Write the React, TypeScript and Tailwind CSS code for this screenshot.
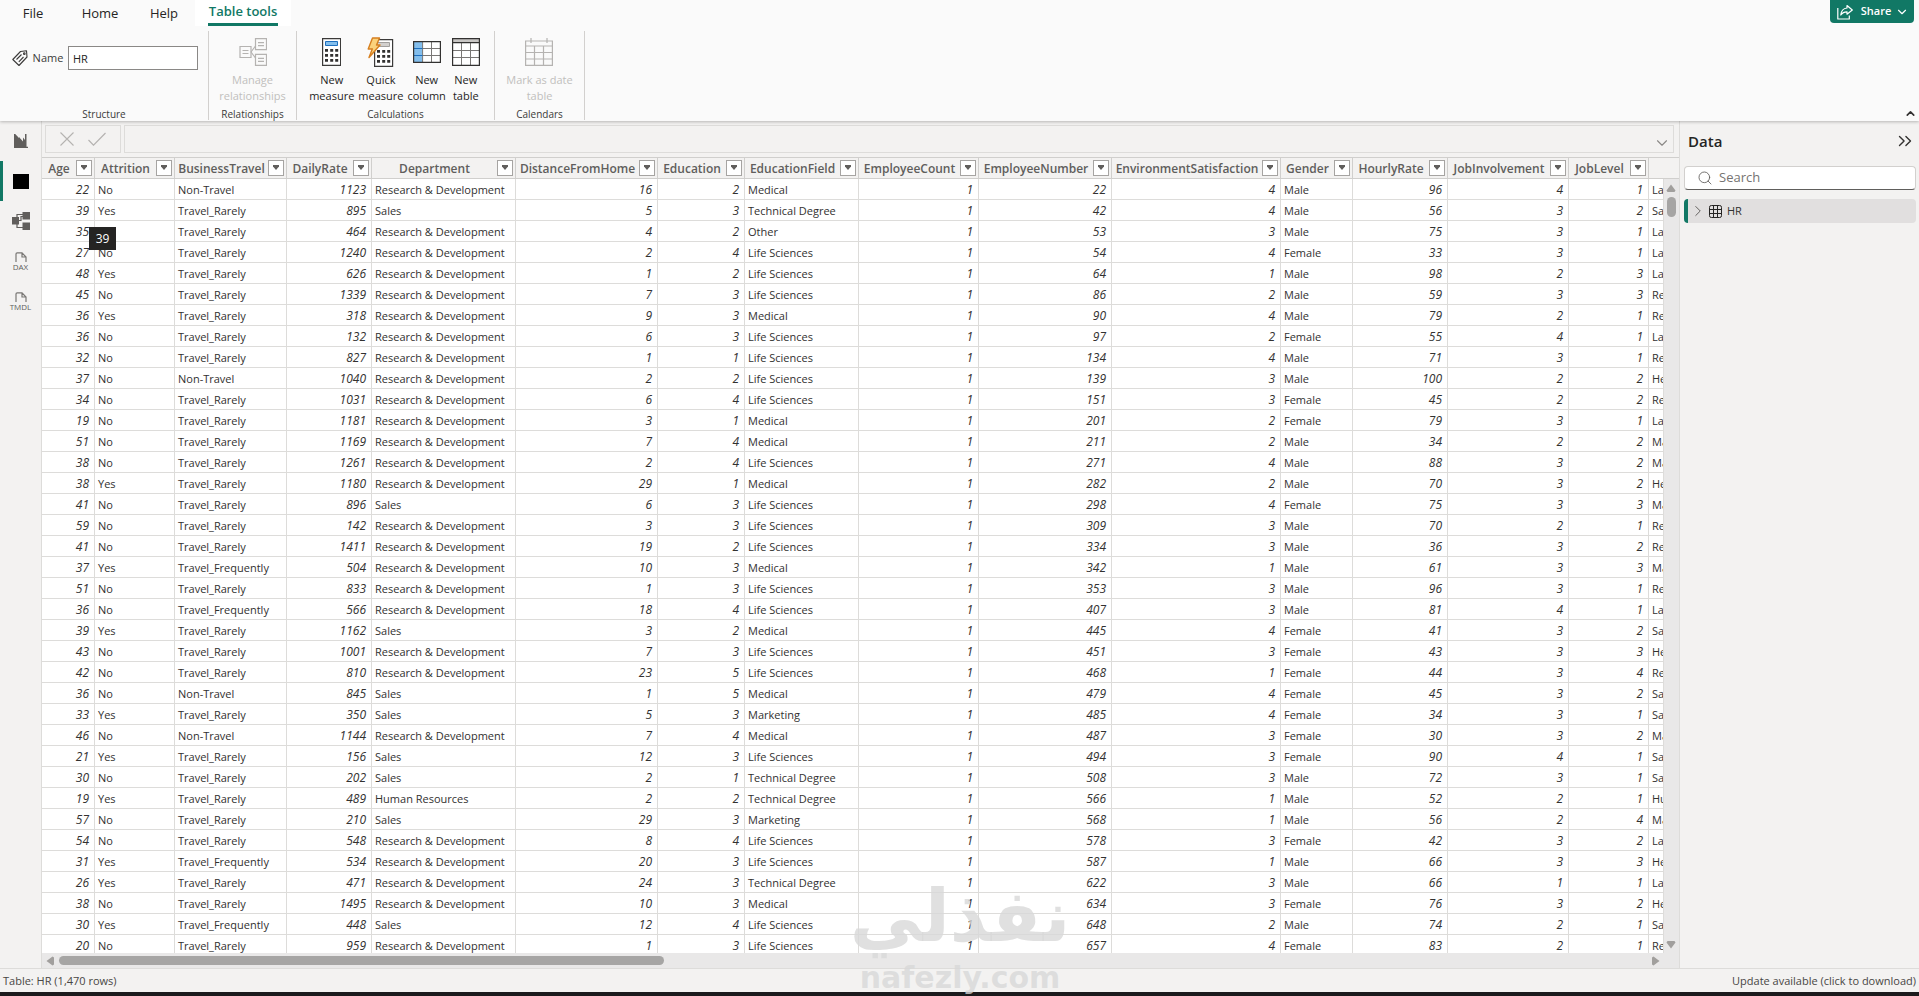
import React, { useState } from 'react';
import { ChevronDown, ChevronRight, ChevronsRight, ChevronUp, Search } from 'lucide-react';

interface Column {
  name: string;
  width: string;
  numeric?: boolean;
}

const columns: Column[] = [
  { name: 'Age', width: 'w-[53px]', numeric: true },
  { name: 'Attrition', width: 'w-[80px]' },
  { name: 'BusinessTravel', width: 'w-[112px]' },
  { name: 'DailyRate', width: 'w-[85px]', numeric: true },
  { name: 'Department', width: 'w-[144px]' },
  { name: 'DistanceFromHome', width: 'w-[142px]', numeric: true },
  { name: 'Education', width: 'w-[87px]', numeric: true },
  { name: 'EducationField', width: 'w-[114px]' },
  { name: 'EmployeeCount', width: 'w-[120px]', numeric: true },
  { name: 'EmployeeNumber', width: 'w-[133px]', numeric: true },
  { name: 'EnvironmentSatisfaction', width: 'w-[169px]', numeric: true },
  { name: 'Gender', width: 'w-[72px]' },
  { name: 'HourlyRate', width: 'w-[95px]', numeric: true },
  { name: 'JobInvolvement', width: 'w-[121px]', numeric: true },
  { name: 'JobLevel', width: 'w-[80px]', numeric: true },
];

const travel: Record<string, string> = { R: 'Travel_Rarely', F: 'Travel_Frequently', N: 'Non-Travel' };
const departments: Record<string, string> = { RD: 'Research & Development', S: 'Sales', HR: 'Human Resources' };
const fields: Record<string, string> = {
  Med: 'Medical',
  Tech: 'Technical Degree',
  Oth: 'Other',
  Life: 'Life Sciences',
  Mkt: 'Marketing',
};
const roles: Record<string, string> = {
  La: 'Laboratory Technician',
  Sa: 'Sales Executive',
  Re: 'Research Scientist',
  He: 'Healthcare Representative',
  Ma: 'Manager',
  Hu: 'Human Resources',
};

// age attrition travel rate dept distance edu field count number env gender hourly involvement level role
const source = `22 No N 1123 RD 16 2 Med 1 22 4 Male 96 4 1 La
39 Yes R 895 S 5 3 Tech 1 42 4 Male 56 3 2 Sa
35 No R 464 RD 4 2 Oth 1 53 3 Male 75 3 1 La
27 No R 1240 RD 2 4 Life 1 54 4 Female 33 3 1 La
48 Yes R 626 RD 1 2 Life 1 64 1 Male 98 2 3 La
45 No R 1339 RD 7 3 Life 1 86 2 Male 59 3 3 Re
36 Yes R 318 RD 9 3 Med 1 90 4 Male 79 2 1 Re
36 No R 132 RD 6 3 Life 1 97 2 Female 55 4 1 La
32 No R 827 RD 1 1 Life 1 134 4 Male 71 3 1 Re
37 No N 1040 RD 2 2 Life 1 139 3 Male 100 2 2 He
34 No R 1031 RD 6 4 Life 1 151 3 Female 45 2 2 Re
19 No R 1181 RD 3 1 Med 1 201 2 Female 79 3 1 La
51 No R 1169 RD 7 4 Med 1 211 2 Male 34 2 2 Ma
38 No R 1261 RD 2 4 Life 1 271 4 Male 88 3 2 Ma
38 Yes R 1180 RD 29 1 Med 1 282 2 Male 70 3 2 He
41 No R 896 S 6 3 Life 1 298 4 Female 75 3 3 Ma
59 No R 142 RD 3 3 Life 1 309 3 Male 70 2 1 Re
41 No R 1411 RD 19 2 Life 1 334 3 Male 36 3 2 Re
37 Yes F 504 RD 10 3 Med 1 342 1 Male 61 3 3 Ma
51 No R 833 RD 1 3 Life 1 353 3 Male 96 3 1 Re
36 No F 566 RD 18 4 Life 1 407 3 Male 81 4 1 La
39 Yes R 1162 S 3 2 Med 1 445 4 Female 41 3 2 Sa
43 No R 1001 RD 7 3 Life 1 451 3 Female 43 3 3 He
42 No R 810 RD 23 5 Life 1 468 1 Female 44 3 4 Re
36 No N 845 S 1 5 Med 1 479 4 Female 45 3 2 Sa
33 Yes R 350 S 5 3 Mkt 1 485 4 Female 34 3 1 Sa
46 No N 1144 RD 7 4 Med 1 487 3 Female 30 3 2 Ma
21 Yes R 156 S 12 3 Life 1 494 3 Female 90 4 1 Sa
30 No R 202 S 2 1 Tech 1 508 3 Male 72 3 1 Sa
19 Yes R 489 HR 2 2 Tech 1 566 1 Male 52 2 1 Hu
57 No R 210 S 29 3 Mkt 1 568 1 Male 56 2 4 Ma
54 No R 548 RD 8 4 Life 1 578 3 Female 42 3 2 La
31 Yes F 534 RD 20 3 Life 1 587 1 Male 66 3 3 He
26 Yes R 471 RD 24 3 Tech 1 622 3 Male 66 1 1 La
38 No R 1495 RD 10 3 Med 1 634 3 Female 76 3 2 He
30 Yes F 448 S 12 4 Life 1 648 2 Male 74 2 1 Sa
20 No R 959 RD 1 3 Life 1 657 4 Female 83 2 1 Re`;

const rows = source.split('\n').map((line) => {
  const cells = line.split(' ');
  cells[2] = travel[cells[2]];
  cells[4] = departments[cells[4]];
  cells[7] = fields[cells[7]];
  cells[15] = roles[cells[15]];
  return cells;
});

const TagIcon = () => (
  <svg width="16" height="17" viewBox="0 0 16 17" fill="none" stroke="#3b3a39" strokeWidth="1.1">
    <path d="M.8 9.500 8.500 1.500 14.500.800 15 7 7 15.500Z" strokeLinejoin="round" />
    <path d="m4.500 9.500 5-5M6.800 11.800l4.700-4.800" />
    <circle cx="12.300" cy="3.700" r=".8" />
  </svg>
);

const RelationshipsIcon = () => (
  <svg width="28" height="28" viewBox="0 0 28 28" fill="none" stroke="#b5b3b1" strokeWidth="1.2">
    <path d="M1 8.500h11v11H1zM16.500 .6h11v11h-11zM16.500 16.400h11v11h-11z" />
    <path d="M3.500 12.500h6M3.500 15.500h6M19 4.600h6M19 7.600h6M19 20.400h6M19 23.400h6M12 14l4.500-6M12 14l4.500 6" />
  </svg>
);

const CalcBody = ({ screen, edge }: { screen: string; edge: string }) => (
  <>
    <path d="M.6.600h18v26.800H.6z" fill="#fff" stroke="#3b3a39" strokeWidth="1.2" />
    <path d="M3.500 3.500h12v4h-12z" fill={screen} stroke={edge} />
    <path
      d="M3 11h3v2.800H3zM8.200 11h3v2.800h-3zM13.200 11h3v2.800h-3zM3 16h3v2.800H3zM8.200 16h3v2.800h-3zM13.200 16h3v2.800h-3zM3 21h3v2.800H3zM8.200 21h3v2.800h-3zM13.200 21h3v2.800h-3z"
      fill="#323130"
    />
  </>
);

const MeasureIcon = () => (
  <svg width="19" height="28" viewBox="0 0 19 28">
    <CalcBody screen="#83beec" edge="#1e6fbe" />
  </svg>
);

const QuickMeasureIcon = () => (
  <svg width="27" height="30" viewBox="0 0 27 30">
    <g transform="translate(7 2)">
      <CalcBody screen="#d2d0ce" edge="#a19f9d" />
    </g>
    <path
      d="M5.500 1h7L9.500 8H13L2 20.500 5.300 12H1.200Z"
      fill="#fbd27c"
      stroke="#d67f1f"
      strokeWidth="1.4"
      strokeLinejoin="round"
    />
  </svg>
);

const NewColumnIcon = () => (
  <svg width="28" height="22" viewBox="0 0 28 22" fill="none">
    <path d="M.6.600h26.800v20.800H.6z" fill="#fff" />
    <path d="M.6.600h9v20.800h-9z" fill="#83beec" />
    <path d="M9.600.600v20.800M18.500.600v20.800M9.600 7.500h18M9.600 14.500h18" stroke="#797775" />
    <path d="M.6 7.500h9M.6 14.500h9" stroke="#1e6fbe" />
    <path d="M.6.600h26.800v20.800H.6z" stroke="#323130" strokeWidth="1.2" />
  </svg>
);

const NewTableIcon = () => (
  <svg width="28" height="28" viewBox="0 0 28 28" fill="none">
    <path d="M.6.600h26.800v26.800H.6z" fill="#fff" />
    <path d="M.6.600h26.800v4H.6z" fill="#c8c6c4" />
    <path d="M9.500 4.600v23M18.500 4.600v23M.6 12.500h27M.6 19.500h27" stroke="#797775" />
    <path d="M.6 4.600h27M.6.600h26.800v26.800H.6z" stroke="#323130" strokeWidth="1.2" />
  </svg>
);

const CalendarIcon = () => (
  <svg width="28" height="28" viewBox="0 0 28 28" fill="none" stroke="#b5b3b1" strokeWidth="1.2">
    <path d="M.6 3h26.800v24.400H.6zM.6 8h26.800M6 0v5M22 0v5M.6 14.500h26.800M.6 21h26.800M9.500 8v19M18.500 8v19" />
  </svg>
);

const ShareIcon = () => (
  <svg width="16" height="16" viewBox="0 0 16 16" fill="none" stroke="currentColor" strokeWidth="1.2" strokeLinejoin="round">
    <path d="M10 1.500 15.300 6 10 10.200V7.800C7 7.800 5.200 8.800 3.800 11 4.200 7 6.500 4.300 10 4Z" />
    <path d="M.8 4v11h11.500v-3.500" />
  </svg>
);

const ReportIcon = () => (
  <svg width="14" height="14" viewBox="0 0 14 14" fill="#605e5c">
    <path d="M0 0h1.200l3.800 4v-1L9 7.500V3.500L11 6V0h1.500v12.800H14V14H0Z" />
  </svg>
);

const TableViewIcon = () => (
  <svg width="16" height="15" viewBox="0 0 16 15">
    <path d="M0 0h16v15H0z" fill="#000" />
  </svg>
);

const ModelIcon = () => (
  <svg width="18" height="18" viewBox="0 0 18 18" fill="#605e5c">
    <path d="M0 5h7v7.500H0zM10.500 0H18v7.500h-7.500zM10.500 10.500H18V18h-7.500z" />
    <path d="M5 5V2.500h6M5 12v3.500h6M7 8.500h2v-4h2" fill="none" stroke="#605e5c" strokeWidth="1.2" />
  </svg>
);

const PageIcon = () => (
  <svg width="12" height="11" viewBox="0 0 12 11" fill="none" stroke="#797775" strokeWidth="1.2">
    <path d="M1 10V2A1.200 1.200 0 0 1 2.200.800H7L11 5v5M7 .8V5h4" />
  </svg>
);

const GridIcon = () => (
  <svg width="13" height="13" viewBox="0 0 13 13" fill="none" stroke="#252423">
    <rect x=".5" y=".5" width="12" height="12" rx="1.800" />
    <path d="M4.500.500v12M8.500.500v12M.5 4.500h12M.5 8.500h12" />
  </svg>
);

const Arrow = ({ d }: { d: string }) => (
  <svg width="10" height="10" viewBox="0 0 10 10" fill="#a19f9d" className="shrink-0">
    <path d={d} />
  </svg>
);

interface CommandProps {
  icon: React.ReactNode;
  lines: [string, string];
  disabled?: boolean;
}

const Command: React.FC<CommandProps> = ({ icon, lines, disabled }) => (
  <button
    type="button"
    disabled={disabled}
    className="flex min-w-8 flex-col items-center text-[11px] leading-4 text-[#252423] disabled:text-[#c1bfbd]"
  >
    <span className="mb-1 flex h-8 items-center justify-center">{icon}</span>
    <span>{lines[0]}</span>
    <span>{lines[1]}</span>
  </button>
);

interface GroupProps {
  label: string;
  width: string;
  children: React.ReactNode;
}

const Group: React.FC<GroupProps> = ({ label, width, children }) => (
  <section className={`${width} flex shrink-0 flex-col justify-between border-r border-[#d2d0ce]`}>
    <div className="flex justify-center gap-1 pt-[5px]">{children}</div>
    <div className="text-center text-[10px] leading-3 text-[#3b3a39]">{label}</div>
  </section>
);

const Ribbon: React.FC = () => {
  const [name, setName] = useState('HR');

  return (
    <header className="relative z-10 shrink-0 bg-[#fafafa] shadow-[0_1px_3px_rgba(0,0,0,0.25)]">
      <div className="flex h-[26px] items-start justify-between pl-[11px] pr-[5px]">
        <nav className="flex text-[13px] leading-[22px] text-[#252423]">
          <button type="button" className="w-11 text-center">File</button>
          <button type="button" className="w-[90px] text-center">Home</button>
          <button type="button" className="w-[38px] text-center">Help</button>
          <button type="button" className="ml-3 h-[26px] w-24 bg-white px-[13px] font-semibold text-[#117865]">
            <span className="block h-[26px] whitespace-nowrap border-b-[3px] border-[#117865]">Table tools</span>
          </button>
        </nav>
        <button
          type="button"
          className="flex h-[23px] w-[84px] items-center rounded-b bg-[#117865] pl-[7px] text-[11px] font-semibold text-white"
        >
          <ShareIcon />
          <span className="w-[46px] text-center">Share</span>
          <ChevronDown size={14} strokeWidth={2} className="-ml-1" />
        </button>
      </div>
      <div className="flex h-[95px] pb-px pt-[5px]">
        <Group label="Structure" width="w-[209px]">
          <label className="flex items-center pl-[2px] pt-[10px] text-[11px] text-[#3b3a39]">
            <TagIcon />
            <span className="w-10 text-center">Name</span>
            <input
              value={name}
              onChange={(e) => setName(e.target.value)}
              className="h-6 w-[130px] border border-[#8a8886] bg-white px-1 text-[11px] text-[#252423] outline-none"
            />
          </label>
        </Group>
        <Group label="Relationships" width="w-[88px]">
          <Command icon={<RelationshipsIcon />} lines={['Manage', 'relationships']} disabled />
        </Group>
        <Group label="Calculations" width="w-[198px]">
          <Command icon={<MeasureIcon />} lines={['New', 'measure']} />
          <Command icon={<QuickMeasureIcon />} lines={['Quick', 'measure']} />
          <Command icon={<NewColumnIcon />} lines={['New', 'column']} />
          <Command icon={<NewTableIcon />} lines={['New', 'table']} />
        </Group>
        <Group label="Calendars" width="w-[90px]">
          <Command icon={<CalendarIcon />} lines={['Mark as date', 'table']} disabled />
        </Group>
        <button type="button" aria-label="Collapse ribbon" className="ml-auto self-end pr-[2px]">
          <ChevronUp size={13} strokeWidth={3} className="text-[#323130]" />
        </button>
      </div>
    </header>
  );
};

const ViewRail: React.FC = () => (
  <nav className="flex w-[42px] shrink-0 flex-col border-r border-[#dddcda]">
    <button type="button" aria-label="Report view" className="flex h-10 items-center justify-center">
      <ReportIcon />
    </button>
    <button
      type="button"
      aria-label="Table view"
      className="flex h-10 items-center justify-center border-l-[3px] border-[#117865] pr-[3px]"
    >
      <TableViewIcon />
    </button>
    <button type="button" aria-label="Model view" className="flex h-10 items-center justify-center">
      <ModelIcon />
    </button>
    <button type="button" className="flex h-10 flex-col items-center justify-center text-[8px] leading-[7px] text-[#605e5c]">
      <PageIcon />
      DAX
    </button>
    <button type="button" className="flex h-10 flex-col items-center justify-center text-[8px] leading-[7px] text-[#605e5c]">
      <PageIcon />
      TMDL
    </button>
  </nav>
);

const FormulaBar: React.FC = () => (
  <div className="flex h-[36px] shrink-0 items-center gap-[3px] pb-1 pl-[3px] pr-[5px] pt-1">
    <div className="flex h-7 w-[76px] items-center justify-center gap-[14px] border border-[#dddcda] text-[#b5b3b1]">
      <button type="button" aria-label="Cancel">
        <svg width="14" height="14" viewBox="0 0 14 14" fill="none" stroke="currentColor" strokeWidth="1.1">
          <path d="m.5.500 13 13M13.500.500l-13 13" />
        </svg>
      </button>
      <button type="button" aria-label="Commit">
        <svg width="18" height="14" viewBox="0 0 18 14" fill="none" stroke="currentColor" strokeWidth="1.2">
          <path d="m.5 8 5 5.200L17.500 1" />
        </svg>
      </button>
    </div>
    <div className="flex h-7 flex-1 items-end justify-end border border-[#dddcda] pr-[2px]">
      <button type="button" aria-label="Expand formula bar">
        <ChevronDown size={18} strokeWidth={1.5} className="text-[#8a8886]" />
      </button>
    </div>
  </div>
);

const HeaderCell = ({ name }: { name: string }) => (
  <th className="h-[22px] border-y border-r border-[#d0cfcd] bg-[#f3f2f1] p-0">
    <div className="flex items-center pr-[2px]">
      <span className="flex-1 pt-[2px] text-center font-semibold">{name}</span>
      <button
        type="button"
        aria-label={`Filter ${name}`}
        className="flex size-4 shrink-0 items-start justify-center border border-[#a6a4a2] bg-white pt-1"
      >
        <svg width="6" height="5" viewBox="0 0 6 5" fill="#605e5c">
          <path d="M0 0h6v1.500L3 5 0 1.500Z" />
        </svg>
      </button>
    </div>
  </th>
);

const DataGrid: React.FC = () => (
  <div className="relative flex min-h-0 flex-1 flex-col bg-[#e9e8e8]">
    <div className="flex min-h-0 flex-1">
      <div className="min-w-0 flex-1 overflow-hidden bg-white">
        <table className="w-full table-fixed border-separate border-spacing-0 whitespace-nowrap text-[12px] leading-4 text-[#323130]">
          <colgroup>
            {columns.map((col) => (
              <col key={col.name} className={col.width} />
            ))}
            <col />
          </colgroup>
          <thead className="text-[#605e5c]">
            <tr>
              {columns.map((col) => (
                <HeaderCell key={col.name} name={col.name} />
              ))}
              <th aria-label="JobRole" className="border-y border-[#d0cfcd] bg-[#f3f2f1] p-0" />
            </tr>
          </thead>
          <tbody>
            {rows.map((row) => (
              <tr key={row[9]}>
                {row.map((cell, i) => (
                  <td
                    key={i}
                    className={
                      columns[i]?.numeric
                        ? 'h-[21px] border-b border-r border-[#dddcda] p-0 pr-[5px] pt-[2px] text-right italic'
                        : 'h-[21px] overflow-hidden border-b border-r border-[#dddcda] p-0 pl-[3px] pt-[2px] text-[11px]'
                    }
                  >
                    {cell}
                  </td>
                ))}
              </tr>
            ))}
          </tbody>
        </table>
      </div>
      <div className="flex w-[15px] shrink-0 flex-col">
        <div className="h-[22px] border-y border-[#d0cfcd] bg-[#f3f2f1]" />
        <div className="flex flex-1 flex-col items-center pb-[3px] pr-px pt-1">
          <Arrow d="M5 1.500 9.500 7.500 8.500 9h-7L.5 7.500Z" />
          <div className="mt-1 h-5 w-[9px] rounded-full bg-[#a6a5a4]" />
          <div className="mt-auto">
            <Arrow d="M5 8.500 .5 2.500 1.500 1h7L9.500 2.500Z" />
          </div>
        </div>
      </div>
    </div>
    <div className="flex h-[15px] shrink-0 items-center pl-[3px] pr-[18px]">
      <Arrow d="M1.500 5 7.500.500 9 1.500v7L7.500 9.500Z" />
      <div className="ml-1 flex-1">
        <div className="h-[9px] w-[38%] rounded-full bg-[#a6a5a4]" />
      </div>
      <Arrow d="M8.500 5 2.500 9.500 1 8.500v-7L2.500.500Z" />
    </div>
    <div className="absolute left-[47px] top-[70px] h-[23px] w-[27px] bg-[#252423] text-center text-xs leading-[23px] text-white">
      39
    </div>
  </div>
);

const DataPane: React.FC = () => {
  const [query, setQuery] = useState('');

  return (
    <aside className="flex w-[240px] shrink-0 flex-col border-l border-[#dddcda] pl-1 pr-[3px]">
      <div className="flex h-10 items-center justify-between pl-1">
        <h2 className="text-[15px] font-semibold text-[#252423]">Data</h2>
        <button type="button" aria-label="Collapse pane">
          <ChevronsRight size={22} strokeWidth={1.5} className="text-[#323130]" />
        </button>
      </div>
      <label className="mt-[5px] flex h-6 items-center gap-[6px] rounded border border-[#d2d0ce] border-b-[#605e5c] bg-white pl-3 text-[#605e5c]">
        <Search size={16} strokeWidth={1.3} className="shrink-0" />
        <input
          value={query}
          onChange={(e) => setQuery(e.target.value)}
          placeholder="Search"
          aria-label="Search"
          className="min-w-0 flex-1 bg-transparent text-[13px] outline-none placeholder:text-[#757371]"
        />
      </label>
      <button
        type="button"
        className="mt-[9px] flex h-6 items-center rounded border-l-4 border-[#117865] bg-[#e1dfdf] pl-px text-[11px] text-[#323130]"
      >
        <ChevronRight size={18} strokeWidth={1.3} className="mr-[2px] text-[#605e5c]" />
        <GridIcon />
        <span className="ml-[5px]">HR</span>
      </button>
    </aside>
  );
};

const Watermark: React.FC = () => (
  <div
    aria-hidden="true"
    className="pointer-events-none absolute bottom-0 left-[854px] z-20 flex w-[212px] flex-col items-center text-[#d8d8d8]/80"
  >
    <span lang="ar" dir="rtl" className="font-['DejaVu_Sans',sans-serif] text-[72px] font-bold leading-[88px]">نفذلي</span>
    <span className="font-['DejaVu_Sans',sans-serif] text-[30px] font-bold leading-[36px]">nafezly.com</span>
  </div>
);

const App: React.FC = () => (
  <div className="relative flex h-screen flex-col overflow-hidden bg-[#f3f2f1] font-['Open_Sans','Noto_Sans',sans-serif]">
    <Ribbon />
    <div className="flex min-h-0 flex-1">
      <ViewRail />
      <main className="flex min-w-0 flex-1 flex-col">
        <FormulaBar />
        <DataGrid />
      </main>
      <DataPane />
    </div>
    <footer className="flex h-[28px] shrink-0 items-center justify-between border-b-4 border-t border-b-[#1b1a1c] border-t-[#dddcda] px-[3px] pt-[2px] text-[11px] text-[#484644]">
      <span>Table: HR (1,470 rows)</span>
      <button type="button">Update available (click to download)</button>
    </footer>
    <Watermark />
  </div>
);

export default App;
